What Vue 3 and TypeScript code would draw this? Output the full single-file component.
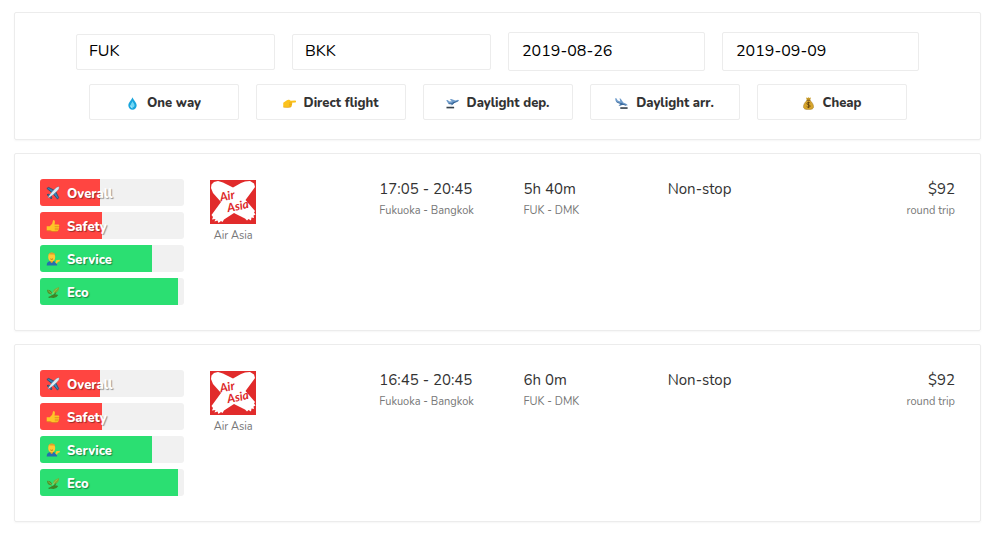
<script setup lang="ts">
import { ref } from 'vue'

interface Rating {
  icon: string
  label: string
  value: number
}

interface Flight {
  id: number
  airline: string
  times: string
  route: string
  duration: string
  airports: string
  stops: string
  price: string
  fare: string
  ratings: Rating[]
}

const fields = ref([
  { id: 'origin', label: 'Origin', value: 'FUK', date: false },
  { id: 'destination', label: 'Destination', value: 'BKK', date: false },
  { id: 'departure', label: 'Departure date', value: '2019-08-26', date: true },
  { id: 'return', label: 'Return date', value: '2019-09-09', date: true },
])

const filters = [
  { icon: 'drop', label: 'One way' },
  { icon: 'point', label: 'Direct flight' },
  { icon: 'takeoff', label: 'Daylight dep.' },
  { icon: 'landing', label: 'Daylight arr.' },
  { icon: 'money', label: 'Cheap' },
]

const ratings: Rating[] = [
  { icon: 'plane', label: 'Overall', value: 41.5 },
  { icon: 'thumb', label: 'Safety', value: 43 },
  { icon: 'person', label: 'Service', value: 77.5 },
  { icon: 'leaf', label: 'Eco', value: 95.5 },
]

const shared = {
  airline: 'Air Asia',
  route: 'Fukuoka - Bangkok',
  airports: 'FUK - DMK',
  stops: 'Non-stop',
  price: '$92',
  fare: 'round trip',
  ratings,
}

const flights: Flight[] = [
  { id: 1, times: '17:05 - 20:45', duration: '5h 40m', ...shared },
  { id: 2, times: '16:45 - 20:45', duration: '6h 0m', ...shared },
]
</script>

<template>
  <main class="page">
    <form class="card search" @submit.prevent>
      <div class="fields">
        <input
          v-for="f in fields"
          :key="f.id"
          v-model="f.value"
          type="text"
          class="field"
          :class="{ date: f.date }"
          :name="f.id"
          :aria-label="f.label"
        />
      </div>
      <div class="filters">
        <button v-for="f in filters" :key="f.label" type="button" class="filter">
          <svg class="icon" viewBox="0 0 16 16" aria-hidden="true">
            <template v-if="f.icon === 'drop'">
              <path d="M8 .3C7 3.500 2.900 6.500 2.900 10.500a5.100 5.100 0 0 0 10.200 0C13.100 6.500 9 3.500 8 .3z" fill="#18a5dc" />
              <path d="M8 5c-.6 2-2.300 3.400-2.300 5.400 0 1.500 1 2.600 2.300 2.600s2.500-.8 2.500-2.400C10.500 8.500 8.600 7 8 5z" fill="#6fd8f6" />
              <path d="M5.600 10.500q.2 2.400 2.400 2.900" fill="none" stroke="#d5f6ff" stroke-width="1" />
            </template>
            <template v-else-if="f.icon === 'point'">
              <path d="M.3 7 4.300 4.200q1.700-1.200 3.400-.8l1.800 1.200 5.600-.2q1 .1 1 1.100t-1 1.200l-4.200.5q1 .8.1 1.800.5 1-.4 1.700.2 1.200-1 1.600-1 .6-4.800.5L.3 12.600z" fill="#fbc21d" />
              <path d="M7.500 7.300h3.400M7.500 9.200h3.400M7.300 11h3M.6 12.500l4.300.3q3.500.1 4.800-.5" fill="none" stroke="#dd9a1a" stroke-width=".7" />
            </template>
            <template v-else-if="f.icon === 'takeoff'">
              <path d="M.2 4l1.700-.3 2.400 1.900 3-.5L4.600 3l1.900-.4 5 1.700 2.300-.7q2-.3 2.200.5.100.9-1.700 1.600L6.400 8.700q-2.300.7-3.600-.7z" fill="#6f9ccb" />
              <path d="M8.800 6.600 5.800 10.200l2-.3 4.600-4.600z" fill="#3f72a8" />
              <path d="M3.200 8.200q2.200.4 4.200-.3l7-2.800" fill="none" stroke="#2c5687" stroke-width=".8" />
              <path d="M.6 13h9.400" stroke="#35404a" stroke-width="2" />
            </template>
            <template v-else-if="f.icon === 'landing'">
              <path d="M.2 1.400l1.500.2 1.600 2.800 3.200 1.100-.9-3.900 1.500.6 3.100 4.600 3.400 1.400q2 .9 1.800 1.800-.4.900-2.400.4L3 7Q1 5.900.6 4.300z" fill="#6f9ccb" />
              <path d="M7.800 7.600 4.300 10.600l1.900.2 5.100-1.800z" fill="#3f72a8" />
              <path d="M1.800 5.900q1 .9 2.500 1.300l9.200 3" fill="none" stroke="#2c5687" stroke-width=".8" />
              <path d="M6.500 13.600h9" stroke="#35404a" stroke-width="2" />
            </template>
            <template v-else>
              <path d="M4.900.6 6.800 1.300l1.200-1 1.200 1 1.900-.7-1.200 3.400H6.100z" fill="#c79a27" />
              <path d="M6.200 4.200h3.600c2.600 2 4.400 5 4.400 7.700 0 2.600-1.800 3.500-6.200 3.500s-6.200-.9-6.200-3.500c0-2.700 1.800-5.700 4.400-7.700z" fill="#d7a52c" stroke="#8d6416" stroke-width=".5" />
              <path d="M5.600 4.100h4.800" stroke="#795313" stroke-width="1" />
              <path d="M10 7.500q-.7-.8-2-.8-1.900 0-1.900 1.400 0 1.200 1.900 1.500 2 .3 2 1.600 0 1.400-2 1.400-1.400 0-2.200-.9M8 5.700v8" fill="none" stroke="#5e3d0c" stroke-width="1" />
            </template>
          </svg>
          <span>{{ f.label }}</span>
        </button>
      </div>
    </form>

    <article v-for="flight in flights" :key="flight.id" class="card flight">
      <div class="ratings">
        <div
          v-for="r in flight.ratings"
          :key="r.label"
          class="rating"
          role="meter"
          :aria-label="r.label"
          :aria-valuenow="r.value"
          aria-valuemin="0"
          aria-valuemax="100"
        >
          <div class="fill" :class="{ good: r.value >= 50 }" :style="{ width: r.value + '%' }"></div>
          <svg class="badge" viewBox="0 0 16 16" aria-hidden="true">
            <template v-if="r.icon === 'plane'">
              <path d="M1 2.800l1.900-1.200 6 3L7 7.700zM13.200 15l1.200-1.900-3-6L8.300 9z" fill="#3b81b5" stroke="#28506f" stroke-width="1" />
              <path d="M1.200 10l1.200-.7 3 1.100 1.300 3.200-.8 1.200-2-2.500z" fill="#3b81b5" stroke="#28506f" stroke-width="1" />
              <path d="M2.400 13.600c.4-2.400 6.300-9.200 9.200-11.600 1.500-1.100 2.900-1.400 3.300-1s.1 1.800-1 3.300C11.700 7.200 4.800 13.200 2.400 13.600z" fill="#d9edf7" stroke="#63879e" stroke-width=".4" />
            </template>
            <template v-else-if="r.icon === 'thumb'">
              <path d="M.8 8.200h3.500L7 5.500 8 1.600Q8.700.7 9.600 1.500q1.200 1.200.2 4.700h4.100q1.400.1 1.300 1.300 0 .8-.5 1.100.9.800 0 1.900.5 1-.5 1.700.2 1.500-1.400 1.900H7.600L4.500 13.200H.8z" fill="#ffc427" />
              <path d="M9.900 8.500h4.800M10 10.500h4.500M10 12.300h4.100M1 13.400l3.600.1 3 .9h5" fill="none" stroke="#d8891b" stroke-width=".8" />
            </template>
            <template v-else-if="r.icon === 'person'">
              <path d="M.8 15.400q0-4.400 3.600-4.900h4.400q3.600.5 4 4.900z" fill="#286cae" />
              <path d="M5 8.800h3v2.500L6.500 12.500 5 11.300z" fill="#e8a51c" />
              <ellipse cx="6.500" cy="5.700" rx="4" ry="4.800" fill="#ffcb35" />
              <path d="M2.600 4.600Q2.800.8 6.400.7q4-.1 4 3.600L9.200 2.900q-3 .2-5.400-.4z" fill="#dca02c" />
              <path d="M5 7.900q1.500 1 3 0" fill="none" stroke="#7c4915" stroke-width=".7" />
              <path d="M10.600 12.400l1-3 4.200-.6v1.700l-2.300.8-1 2z" fill="#ffc42b" />
            </template>
            <template v-else>
              <path d="M3 14.200Q10.500 13 12 6" fill="none" stroke="#39751e" stroke-width="1.300" />
              <path d="M8.400 9.200Q7.100 4.600 14.900 2.200q.8 6.300-6.500 7z" fill="#78ad35" />
              <path d="M6.900 10.500Q1.400 11 1.200 5.300q5.900.1 5.700 5.200z" fill="#4e9029" />
              <path d="M4 13.600q3.900-4.600 10-2.300-3 5.500-10 2.300z" fill="#3e8325" />
              <path d="M7.500 10.500q1.500-3.800 5.600-6.500M6.500 10 2.500 6.500" fill="none" stroke="#b6d96e" stroke-width=".6" />
            </template>
          </svg>
          <span class="name">{{ r.label }}</span>
        </div>
      </div>

      <div class="airline">
        <svg class="logo" viewBox="0 0 46 44" role="img" aria-label="Air Asia logo">
          <rect width="46" height="44" fill="#e12b2b" />
          <path d="M1 8 1.500 4.500 4 2 8 1l5 1.500L23 7.500 31 3l4-1.500 5-.5 4 2.500 1 3.500-2.500 3.500L35.500 20l9.500 11-1 1.500 1.500 2-2 1 .5 2.500-2.500-.5-.5 3-2.500-1.500-1.500 1.500-2-2L24 33 14 39.500 12.500 42l-1.500-1-2.500 2-1-2.500-3 1 1-2.500-3.500.5 1-2.500-1.500-2L11 22 3 13z" fill="#fff" />
          <g class="script" transform="rotate(-12 23 22)">
            <text x="11" y="19">Air</text>
            <text x="16" y="31">Asia</text>
          </g>
        </svg>
        <span class="minor">{{ flight.airline }}</span>
      </div>

      <div class="detail">
        <span class="major">{{ flight.times }}</span>
        <span class="minor">{{ flight.route }}</span>
      </div>
      <div class="detail">
        <span class="major">{{ flight.duration }}</span>
        <span class="minor">{{ flight.airports }}</span>
      </div>
      <div class="detail price-row">
        <span class="major">{{ flight.stops }}</span>
        <div class="detail price">
          <span class="major">{{ flight.price }}</span>
          <span class="minor">{{ flight.fare }}</span>
        </div>
      </div>
    </article>
  </main>
</template>

<style>
body {
  background: #fff;
}
</style>

<style scoped>
.page {
  display: flex;
  flex-direction: column;
  gap: 13px;
  padding: 12px 19px 12px 14px;
  color: #333;
  font-family: Nunito, Lato, 'Open Sans', sans-serif;
}

.card {
  box-sizing: border-box;
  border: 1px solid #ececec;
  border-radius: 2px;
  box-shadow: 0 1px 2px rgba(0, 0, 0, 0.04);
}

.search {
  display: flex;
  flex-direction: column;
  align-items: center;
  gap: 13px;
  padding: 19px 25px;
}

.fields,
.filters {
  display: flex;
  justify-content: center;
  align-items: center;
  gap: 17px;
}

.field {
  box-sizing: border-box;
  width: 199px;
  height: 36px;
  padding: 0 12px 1px;
  border: 1px solid #ececec;
  border-radius: 2px;
  background: #fff;
  color: #000;
  font-family: inherit;
  font-size: 16px;
}

.field.date {
  width: 197px;
  height: 39px;
  padding: 0 13px 1px;
}

.filter {
  display: flex;
  justify-content: center;
  align-items: center;
  gap: 8px;
  box-sizing: border-box;
  width: 150px;
  height: 36px;
  padding: 2px 0 0;
  border: 1px solid #ececec;
  border-radius: 2px;
  background: #fff;
  color: #333;
  font-family: inherit;
  font-size: 13px;
  font-weight: 800;
}

.icon {
  width: 13px;
  height: 13px;
}

.flight {
  display: grid;
  grid-template-columns: 144fr 195fr 144fr 144fr 287fr;
  align-items: start;
  padding: 25px;
}

.ratings {
  display: flex;
  flex-direction: column;
  gap: 6px;
}

.rating {
  position: relative;
  display: flex;
  align-items: center;
  gap: 7px;
  height: 27px;
  padding-left: 6px;
  border-radius: 3px;
  background: #f1f1f1;
  overflow: hidden;
}

.fill {
  position: absolute;
  top: 0;
  bottom: 0;
  left: 0;
  background: #ff4541;
}

.fill.good {
  background: #2bdf72;
}

.badge {
  position: relative;
  width: 14px;
  height: 14px;
}

.name {
  position: relative;
  padding-top: 3px;
  color: #fff;
  font-size: 13px;
  line-height: 18px;
  font-weight: 800;
  text-shadow: 1px 1px 1px rgba(0, 0, 0, 0.4);
}

.airline {
  display: flex;
  flex-direction: column;
  align-items: center;
  justify-self: start;
  gap: 4px;
  width: 46px;
  margin-left: 26px;
  padding-top: 1px;
  white-space: nowrap;
}

.logo {
  width: 46px;
  height: 44px;
}

.script {
  fill: #dc2929;
  font-family: Lato, sans-serif;
  font-size: 12px;
  font-style: italic;
  font-weight: 700;
}

.detail {
  display: flex;
  flex-direction: column;
  gap: 4px;
}

.detail .major {
  padding-top: 1px;
}

.price-row {
  flex-direction: row;
  justify-content: space-between;
}

.price {
  align-items: flex-end;
}

.major {
  font-size: 15px;
  line-height: 19px;
}

.minor {
  color: #777;
  font-size: 11px;
  line-height: 16px;
}
</style>
